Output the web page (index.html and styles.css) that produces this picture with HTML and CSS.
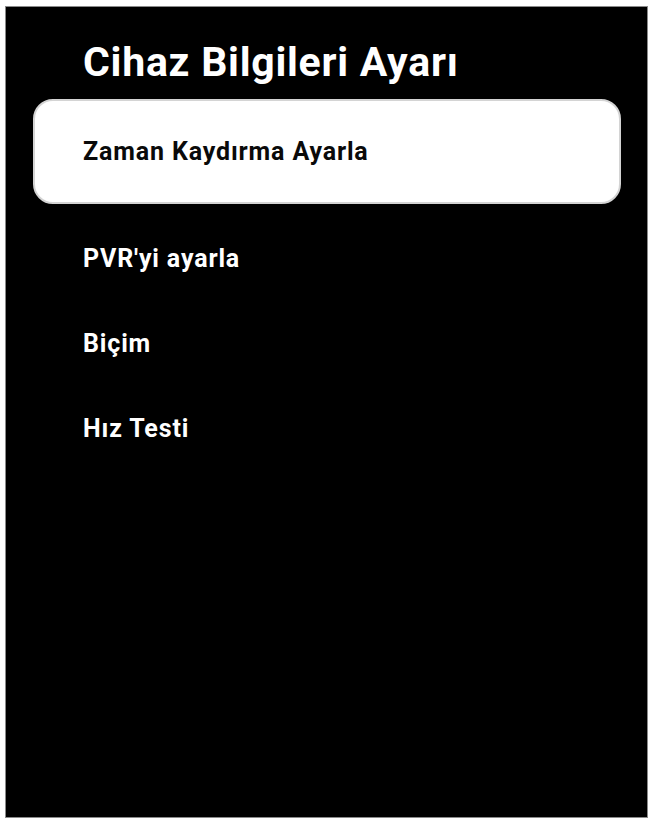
FILE: index.html
```html
<!DOCTYPE html>
<html lang="tr">
<head>
<meta charset="utf-8">
<link rel="stylesheet" href="styles.css">
</head>
<body>
<div class="panel">
  <h1 class="title">Cihaz Bilgileri Ayarı</h1>
  <ul class="menu">
    <li class="item selected">Zaman Kaydırma Ayarla</li>
    <li class="item">PVR'yi ayarla</li>
    <li class="item">Biçim</li>
    <li class="item">Hız Testi</li>
  </ul>
</div>
</body>
</html>
```
FILE: styles.css
```css
html, body {
  margin: 0;
  padding: 0;
  background: #ffffff;
}
body {
  font-family: Roboto, "Liberation Sans", sans-serif;
  padding: 6px 2px 2px 5px;
}
.panel {
  box-sizing: border-box;
  height: 812px;
  background: #000000;
  border: 1px solid #8a8a8a;
  padding: 31px 26px 0 27px;
}
.title {
  margin: 0 0 13px 50px;
  font-size: 41px;
  line-height: 48px;
  font-weight: 700;
  letter-spacing: 0.75px;
  color: #ffffff;
}
.menu {
  list-style: none;
  margin: 0;
  padding: 0;
  display: flex;
  flex-direction: column;
}
.item {
  display: flex;
  align-items: center;
  height: 85px;
  padding-left: 50px;
  font-size: 25px;
  line-height: 28px;
  font-weight: 700;
  letter-spacing: 0.85px;
  color: #ffffff;
}
.item.selected {
  box-sizing: border-box;
  height: 105px;
  margin-bottom: 12px;
  padding-left: 48px;
  background: #ffffff;
  color: #0a0a0a;
  border: 2px solid #d4d4d4;
  border-radius: 20px;
}
```
